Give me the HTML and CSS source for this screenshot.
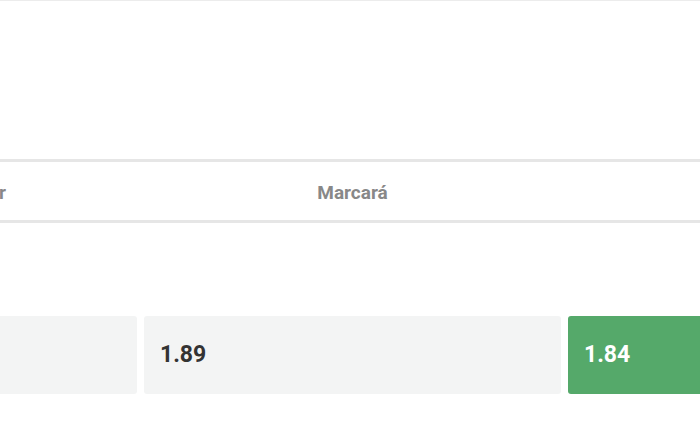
FILE: index.html
```html
<!DOCTYPE html>
<html lang="es">
<head>
<meta charset="utf-8">
<link rel="stylesheet" href="styles.css">
</head>
<body>
<div class="page">
  <div class="top"></div>
  <div class="table">
    <div class="head">
      <div class="hcell hcell-first">Jugador</div>
      <div class="hcell">Marcará</div>
      <div class="hcell">No marcará</div>
    </div>
    <div class="odds">
      <div class="odd"></div>
      <div class="odd">1.89</div>
      <div class="odd odd-best">1.84</div>
    </div>
  </div>
</div>
</body>
</html>
```

FILE: styles.css
```css
html, body {
  margin: 0;
  padding: 0;
  background: #ffffff;
}
.page {
  width: 700px;
  height: 441px;
  overflow: hidden;
  font-family: Roboto, "Liberation Sans", Arial, sans-serif;
}
.top {
  height: 158px;
  border-top: 1px solid #ececec;
}
.table {
  margin-left: -280px;
  width: 1265px;
}
.head {
  display: grid;
  grid-template-columns: 417px 417px 417px;
  column-gap: 7px;
  height: 58px;
  padding-top: 3px;
  box-sizing: content-box;
  height: 55px;
  border-top: 3px solid #e6e6e6;
  border-bottom: 3px solid #e6e6e6;
  align-items: center;
}
.hcell {
  text-align: center;
  font-weight: 700;
  font-size: 19px;
  color: #888888;
}
.hcell-first {
  text-align: right;
  padding-right: 131px;
}
.odds {
  display: grid;
  grid-template-columns: 417px 417px 417px;
  column-gap: 7px;
  margin-top: 93px;
}
.odd {
  height: 78px;
  border-radius: 3px;
  background: #f3f4f4;
  display: flex;
  align-items: center;
  padding-left: 16px;
  padding-bottom: 1px;
  box-sizing: border-box;
  font-weight: 700;
  font-size: 23px;
  color: #333333;
}
.odd-best {
  background: #55a96a;
  color: #ffffff;
}
```
